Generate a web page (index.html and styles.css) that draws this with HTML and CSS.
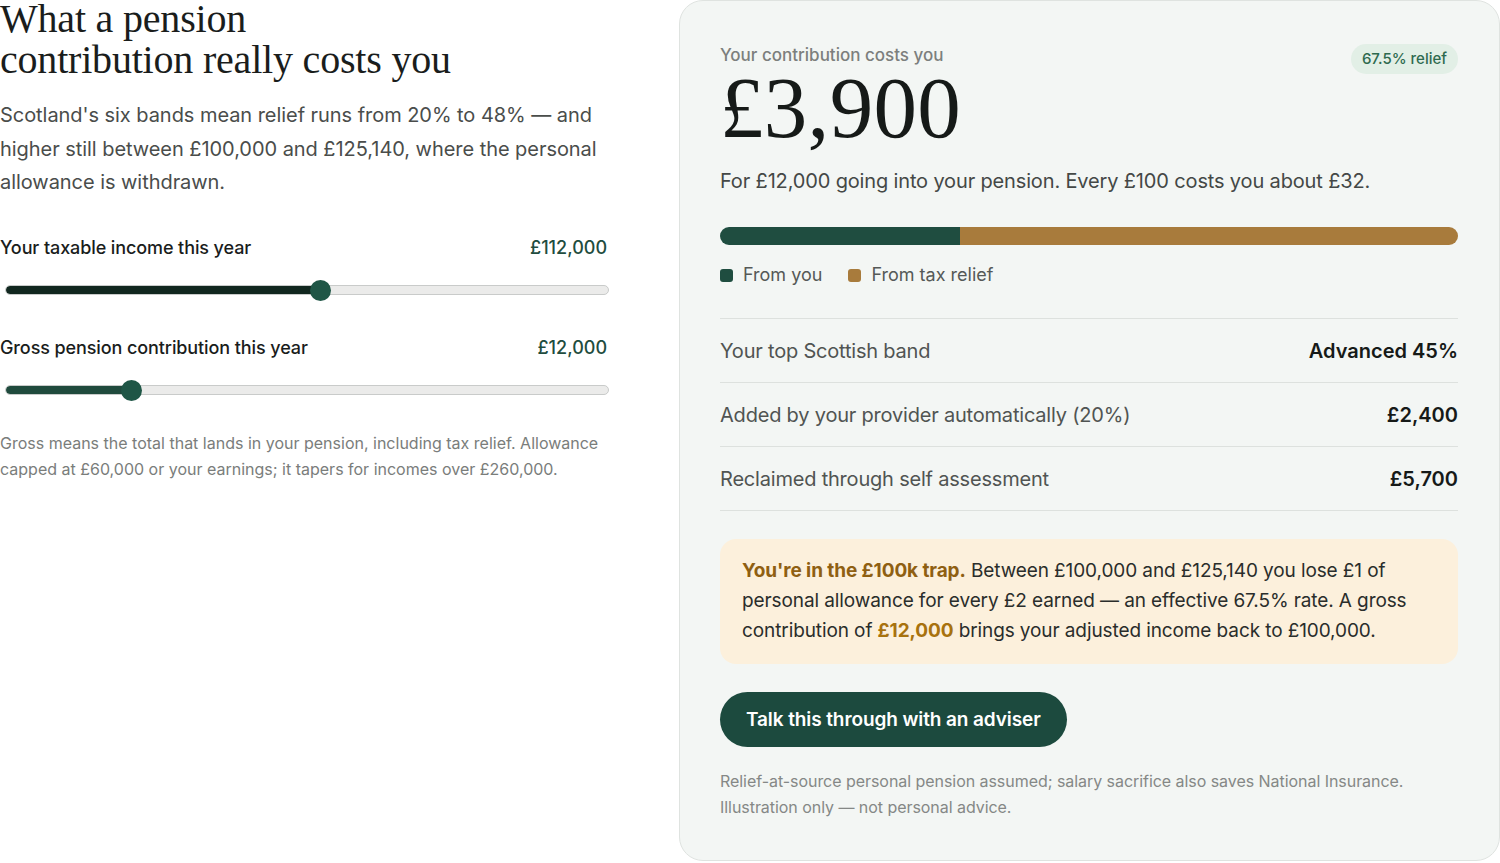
FILE: index.html
```html
<!DOCTYPE html>
<html lang="en">
<head>
<meta charset="utf-8">
<title>Pension contribution cost</title>
<link rel="stylesheet" href="styles.css">
</head>
<body>
<main class="layout">
  <section class="inputs">
    <h1 class="title">What a pension<br>contribution really costs you</h1>
    <p class="intro">Scotland's six bands mean relief runs from 20% to 48% — and higher still between £100,000 and £125,140, where the personal allowance is withdrawn.</p>

    <div class="field">
      <div class="field-head"><span class="field-label">Your taxable income this year</span><span class="field-value">£112,000</span></div>
      <div class="slider">
        <div class="track"><div class="fill fill-dark" style="width: 52.2%"></div></div>
        <div class="thumb" style="left: 52.2%"></div>
      </div>
    </div>

    <div class="field field-second">
      <div class="field-head"><span class="field-label">Gross pension contribution this year</span><span class="field-value">£12,000</span></div>
      <div class="slider">
        <div class="track"><div class="fill fill-green" style="width: 20.9%"></div></div>
        <div class="thumb" style="left: 20.9%"></div>
      </div>
    </div>

    <p class="note">Gross means the total that lands in your pension, including tax relief. Allowance capped at £60,000 or your earnings; it tapers for incomes over £260,000.</p>
  </section>

  <section class="card">
    <div class="card-head">
      <div>
        <div class="eyebrow">Your contribution costs you</div>
        <div class="big">£3,900</div>
      </div>
      <span class="badge">67.5% relief</span>
    </div>
    <p class="summary">For £12,000 going into your pension. Every £100 costs you about £32.</p>

    <div class="bar">
      <div class="bar-you" style="width: 32.5%"></div>
      <div class="bar-relief"></div>
    </div>
    <div class="legend">
      <span class="legend-item"><span class="swatch swatch-you"></span>From you</span>
      <span class="legend-item"><span class="swatch swatch-relief"></span>From tax relief</span>
    </div>

    <div class="rows">
      <div class="row"><span class="row-label">Your top Scottish band</span><span class="row-value">Advanced 45%</span></div>
      <div class="row"><span class="row-label">Added by your provider automatically (20%)</span><span class="row-value">£2,400</span></div>
      <div class="row"><span class="row-label">Reclaimed through self assessment</span><span class="row-value">£5,700</span></div>
    </div>

    <div class="callout">
      <strong class="callout-lead">You're in the £100k trap.</strong> Between £100,000 and £125,140 you lose £1 of personal allowance for every £2 earned — an effective 67.5% rate. A gross contribution of <strong class="callout-amount">£12,000</strong> brings your adjusted income back to £100,000.
    </div>

    <button class="cta" type="button">Talk this through with an adviser</button>

    <p class="footnote">Relief-at-source personal pension assumed; salary sacrifice also saves National Insurance.<br>Illustration only — not personal advice.</p>
  </section>
</main>
</body>
</html>
```

FILE: styles.css
```css
* { box-sizing: border-box; }

html, body {
  margin: 0;
  padding: 0;
  background: #ffffff;
}

body {
  font-family: Inter, "Noto Sans", sans-serif;
  color: #1b1f1d;
}

.layout {
  display: grid;
  grid-template-columns: 610px 821px;
  column-gap: 69px;
  align-items: start;
  width: 1500px;
}

/* Left column */
.title {
  font-family: "Liberation Serif", "DejaVu Serif", serif;
  font-weight: 400;
  font-size: 40px;
  line-height: 41px;
  letter-spacing: -0.2px;
  color: #1a1d1c;
  margin: -2px 0 0 0;
}

.intro {
  font-size: 20px;
  line-height: 33.5px;
  color: #4a4d4b;
  margin: 19px 0 0 0;
  letter-spacing: -0.05px;
}

.field { margin-top: 36px; }
.field-second { margin-top: 35px; }

.field-head {
  display: flex;
  justify-content: space-between;
  align-items: center;
  font-size: 18px;
  line-height: 24px;
  margin-right: 3px;
}

.field-label {
  font-weight: 500;
  color: #1a1d1c;
  letter-spacing: -0.1px;
}

.field-value {
  color: #1f4d40;
  font-weight: 500;
}

.slider {
  position: relative;
  height: 21px;
  margin: 20px 1px 0 5px;
  display: flex;
  align-items: center;
}

.track {
  width: 100%;
  height: 10px;
  border-radius: 5px;
  background: #ebebea;
  border: 1px solid #c9cbca;
  overflow: hidden;
}

.fill {
  height: 100%;
  border-radius: 5px;
}

.fill-dark { background: #11271f; }
.fill-green { background: #1f4a3d; }

.thumb {
  position: absolute;
  top: 0;
  width: 21px;
  height: 21px;
  margin-left: -10px;
  border-radius: 50%;
  background: #1f5646;
}

.note {
  font-size: 16px;
  line-height: 26px;
  color: #7a7d7b;
  margin: 29px 0 0 0;
  letter-spacing: 0;
}

/* Card */
.card {
  background: #f3f6f4;
  border: 1px solid #dfe3e0;
  border-radius: 24px;
  padding: 42px 41px 40px 40px;
  min-height: 861px;
}

.card-head {
  display: flex;
  justify-content: space-between;
  align-items: flex-start;
}

.eyebrow {
  font-size: 17px;
  line-height: 24px;
  font-weight: 500;
  color: #7c7f7d;
}

.big {
  font-family: "Liberation Serif", "DejaVu Serif", serif;
  font-size: 87px;
  line-height: 84px;
  color: #161a18;
  letter-spacing: 0.3px;
  margin-top: -1px;
}

.badge {
  display: inline-block;
  background: #e2efe6;
  color: #2e6a4f;
  font-size: 15px;
  line-height: 30px;
  font-weight: 500;
  padding: 0 11px;
  border-radius: 15px;
  margin-top: 1px;
}

.summary {
  font-size: 20px;
  line-height: 30px;
  color: #444846;
  margin: 16px 0 0 0;
  letter-spacing: -0.15px;
}

.bar {
  display: flex;
  height: 18px;
  border-radius: 9px;
  overflow: hidden;
  margin-top: 31px;
}

.bar-you { background: #1f4d40; }
.bar-relief { flex: 1; background: #a87b3c; }

.legend {
  display: flex;
  gap: 26px;
  margin-top: 18px;
  font-size: 18px;
  line-height: 24px;
  color: #555957;
}

.legend-item {
  display: inline-flex;
  align-items: center;
  gap: 10px;
}

.swatch {
  width: 13px;
  height: 13px;
  border-radius: 3px;
}

.swatch-you { background: #1f4d40; }
.swatch-relief { background: #a87b3c; }

.rows {
  margin-top: 31px;
  border-top: 1px solid #dde1de;
}

.row {
  display: flex;
  justify-content: space-between;
  align-items: center;
  height: 64px;
  border-bottom: 1px solid #dde1de;
  font-size: 20px;
}

.row-label { color: #505452; letter-spacing: -0.2px; }
.row-value { color: #161a18; font-weight: 600; }

.callout {
  margin-top: 28px;
  background: #fcf0dc;
  border-radius: 16px;
  padding: 17px 22px 18px 22px;
  font-size: 19px;
  line-height: 30px;
  color: #2a2d2b;
  letter-spacing: -0.1px;
}

.callout-lead { color: #8f5f12; font-weight: 700; }
.callout-amount { color: #a8720e; font-weight: 700; }

.cta {
  display: inline-block;
  margin-top: 28px;
  height: 55px;
  padding: 0 26px;
  border: 0;
  border-radius: 28px;
  background: #1c4a3e;
  color: #ffffff;
  font-family: Inter, "Noto Sans", sans-serif;
  font-size: 19px;
  font-weight: 600;
  letter-spacing: -0.1px;
}

.footnote {
  font-size: 16px;
  line-height: 26px;
  color: #858886;
  margin: 21px 0 0 0;
  letter-spacing: -0.05px;
}
```
